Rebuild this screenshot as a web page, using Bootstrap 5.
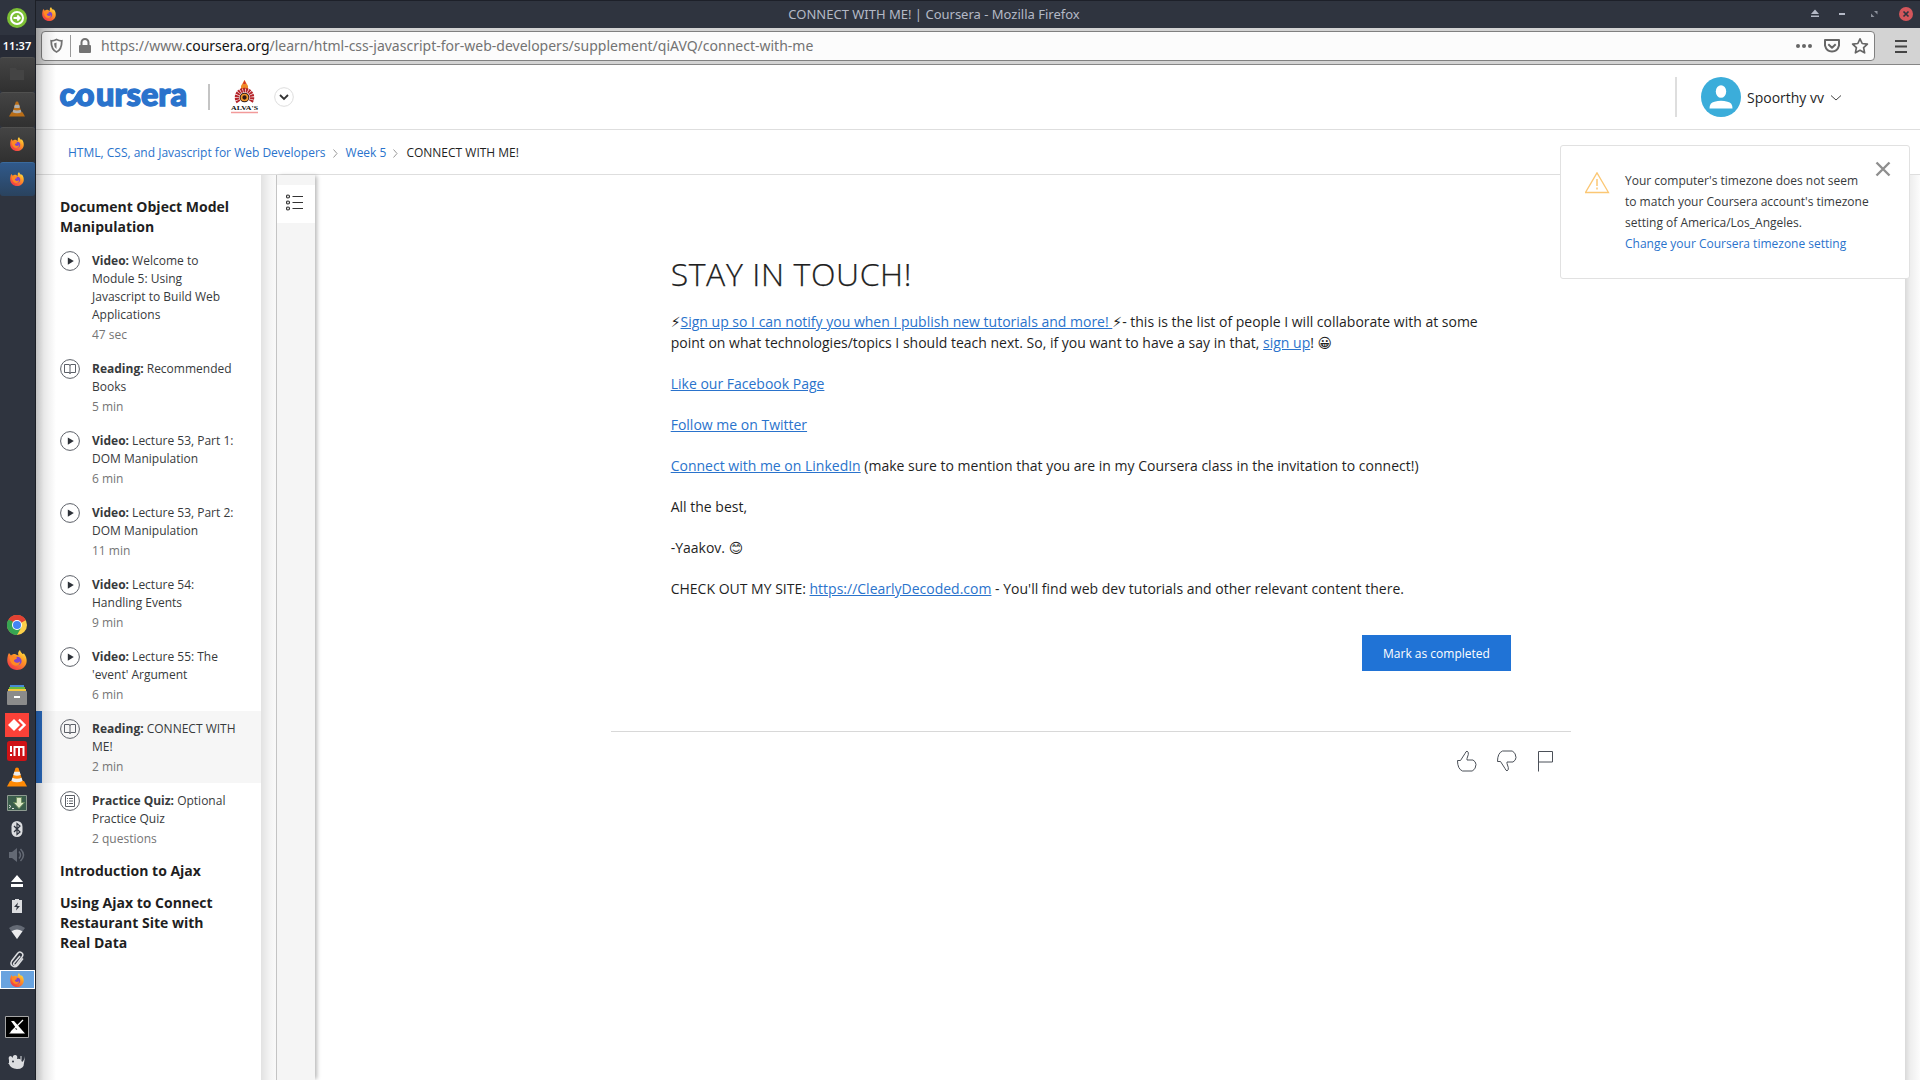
<!DOCTYPE html>
<html lang="en">
<head>
<meta charset="utf-8">
<title>CONNECT WITH ME! | Coursera</title>
<link href="https://cdn.jsdelivr.net/npm/bootstrap@5.3.0/dist/css/bootstrap.min.css" rel="stylesheet">
<style>
body{font-family:"Open Sans","DejaVu Sans",sans-serif;font-size:14px;line-height:21px;color:#1f1f1f;background:#fff;width:1920px;height:1080px;overflow:hidden}
a{color:#2a73cc}
svg{display:block;flex:none}
.dock{width:36px;background:#2f343f;border-right:1px solid #1c1f26;color:#fff;flex:none}
.dock .slot{width:35px;margin-right:-1px;display:flex;align-items:center;justify-content:center;flex:none;padding-right:1px}
.s35{height:35px}.s34{height:34px}.s26{height:26px}.s25{height:25px}
.clock{height:22px;font:600 11px/22px "Noto Sans",sans-serif;background:#272b36;white-space:nowrap;letter-spacing:.1px}
.task{height:35px;background:linear-gradient(#444,#303030);border-radius:3px;border-top:1px solid #50504f;padding-bottom:2px}
.task.current{height:34px;background:linear-gradient(#30598a,#2a435f);border-color:#3a6a9d}
.dim{opacity:.65}
.tray-gap{height:412px}
.titlebar{height:28px;background:#2f343f;border-top:1px solid #1d2029;color:#b4b9c6;font:13px/26px "Noto Sans",sans-serif;padding:0 6px 2px}
.urlrow{height:37px;background:#d3d3d3;border-bottom:1px solid #868686}
.urlbox{height:30px;width:1834px;margin:3px 0 0 5px;border:1px solid #808080;border-radius:4px;background:#fcfcfc;font:14px/26px "Noto Sans",sans-serif;color:#737373}
.urlbox b{font-weight:400;color:#111}
.menu-lines{margin:11px 0 0 19px}
.site-head{height:65px;border-bottom:1px solid #dedede}
.user{padding-right:78px}
.name-label{margin:1px 6px 0;font-size:14px}
.crumbs{height:45px;border-bottom:1px solid #dedede;font-size:12px;padding-left:32px}
.crumbs svg{margin:2px 8px 0 7px}
.crumbs a,.toastbox a{text-decoration:none}
.outline{width:225px;flex:none;padding-top:22px}
.outline h2{font-size:14px;line-height:20px;font-weight:700;margin:0 0 6px 24px}
.outline h2.later{margin:6px 0 12px 24px}
.lesson{padding:9px 0 0 24px;gap:12px;font-size:12px;line-height:18px;color:#373a3c;height:72px}
.lesson svg{margin-top:-1px}
.lesson.tall{height:108px}
.lesson.selected{background:#f6f6f6;border-left:6px solid #2a6cc2;padding-left:18px}
.lesson p{margin:0;width:150px}
.lesson b{font-weight:700}
.lesson span{display:block;margin-top:2px;color:#757575}
.gutter{width:15px;flex:none;background:linear-gradient(90deg,#e2e2e2,#f4f4f4 60%,#fafafa)}
.rail{width:39px;flex:none;background:#f5f5f5;border-left:1px solid #c4c4c4;padding-top:10px;box-shadow:3px 0 4px -1px rgba(0,0,0,.28)}
.rail div{height:38px;background:#fff;padding:9px 0 0 9px}
.reading{padding:79px 0 0 296px}
.sheet{width:960px}
.copy{padding:0 60px 0 59.7px}
.copy h1{font-size:32px;line-height:40px;font-weight:300;letter-spacing:.6px;-webkit-text-stroke:.25px #1f1f1f;margin:0 0 17px}
.copy p{margin:0 0 20px;width:825px}
.btn-done{background:#2073d6;color:#fff;border-radius:0;width:149px;height:36px;font-size:12px;line-height:37px;padding:0;border:0}
.rule{border-top:1px solid #d8d8d8;margin-top:60px;padding:18px 14px 0 0;gap:20px}
.edge-l{left:36px;top:28px;width:20px;height:1052px;background:linear-gradient(90deg,rgba(0,0,0,.24),rgba(0,0,0,.09) 40%,transparent)}
.edge-r{left:1905px;top:175px;width:15px;height:905px;background:linear-gradient(90deg,#d9d9d9,#eee 35%,#fcfcfc)}
.toastbox{left:1560px;top:145px;width:350px;height:134px;background:#fff;border:1px solid #e1e1e1;border-radius:3px;font-size:12px;color:#373a3c;padding:24px 18px 0 24px}
.warn{margin-top:2px}
.dismiss{margin-top:-9px}
</style>
<script src="https://cdn.jsdelivr.net/npm/bootstrap@5.3.0/dist/js/bootstrap.bundle.min.js"></script>
</head>
<body class="d-flex">
<svg width="0" height="0" class="position-absolute">
<defs>
<linearGradient id="fx" x1=".9" y1="0" x2=".2" y2="1"><stop offset="0" stop-color="#fff04a"/><stop offset=".4" stop-color="#ff9a24"/><stop offset="1" stop-color="#f0304c"/></linearGradient>
<symbol id="firefox" viewBox="0 0 20 20"><path fill="url(#fx)" d="M1 5l1-2 2 2.500c1-1 2-1.500 4-1.500L10 5l1.500.5C10.500 3 11.500 1 13 0c.5 2 1.500 2.500 2.500 4L17 3.500C19 6 20 9 19.600 12 19 16.500 15 20 10 20S.5 16 .3 11C.2 8.500.6 7 1 5z"/><circle cx="10.300" cy="11" r="4.300" fill="#8145c9"/><path fill="#ff8a22" d="M2.500 7c2.500-1 4 0 6 0 2 .3 2 1.500 0 2.300-1.500.5-2 1.200-1 2.500 1.500 1.500 4 1.200 5.500-.4C13 16 8 17 5 14c-1.500-2-2.500-4.500-2.500-7z"/></symbol>
<symbol id="vlc" viewBox="0 0 20 20"><path d="M3 14h14l3 5.500H0z" fill="#ff8a05"/><path d="M8.500 1q1.500-1 3 0l4.500 14.500q-6 3-12 0z" fill="#ff8a05"/><path d="M7.300 4.800h5.400l1 3.200q-3.700 1.500-7.400 0zM5.400 10.800q4.600 2 9.200 0l1 3.200q-5.600 2.500-11.200 0z" fill="#eee"/></symbol>
<symbol id="play" viewBox="0 0 20 20"><circle cx="10" cy="10" r="9.400" fill="none" stroke="#5c6068"/><path d="M7.800 6.500v7.200l6-3.600z" fill="#2d3138"/></symbol>
<symbol id="book" viewBox="0 0 20 20"><g fill="none" stroke="#5c6068"><circle cx="10" cy="10" r="9.400"/><path d="M4.500 5.500h4.500q1 .2 1 1 0-.8 1-1h4.500v8h-4.500q-1 0-1 1 0-1-1-1H4.500zM10 6v9"/></g></symbol>
</defs></svg>

<nav class="dock d-flex flex-column">
<div class="slot s35"><svg width="20" height="20" viewBox="0 0 20 20"><circle cx="10" cy="10" r="10" fill="#7cbf35"/><circle cx="10" cy="10" r="6" fill="none" stroke="#fff" stroke-width="2"/><path d="M6.500 10h6M10.300 7.500l2.500 2.500-2.500 2.500" stroke="#fff" stroke-width="1.800" fill="none"/></svg></div>
<div class="slot clock">11:37</div>
<div class="slot task"><svg width="16" height="14"><path d="M1 1h6l1 2h7v10H1z" fill="#444"/></svg></div>
<div class="slot task"><svg class="dim" width="16" height="16"><use href="#vlc"/></svg></div>
<div class="slot task"><svg width="14" height="14"><use href="#firefox"/></svg></div>
<div class="slot task current"><svg width="14" height="14"><use href="#firefox"/></svg></div>
<div class="tray-gap"></div>
<div class="slot s34"><svg width="20" height="20" viewBox="0 0 20 20"><circle cx="10" cy="10" r="10" fill="#fdd04a"/><path d="M10 10L1.300 5A10 10 0 0 1 18.700 5z" fill="#e34133"/><path d="M10 10L18.700 5H10z" fill="#e34133"/><path d="M1.300 5A10 10 0 0 0 10 20l4.300-7.500L10 10z" fill="#36a552"/><path d="M5.700 12.500L1.300 5l4 1z" fill="#36a552"/><circle cx="10" cy="10" r="5" fill="#fff"/><circle cx="10" cy="10" r="4" fill="#4285f4"/></svg></div>
<div class="slot s35"><svg width="20" height="20"><use href="#firefox"/></svg></div>
<div class="slot s35"><svg width="20" height="20" viewBox="0 0 20 20"><path d="M3 0h14v2H3z" fill="#4688d4"/><path d="M2 2h16v2H2z" fill="#69b93c"/><path d="M1 4h18v2H1z" fill="#f4c641"/><rect y="6" width="20" height="14" rx="1" fill="#8b8b8b"/><path d="M7 11h6v2H7z" fill="#fff"/></svg></div>
<div class="slot s26"><svg width="24" height="24" viewBox="0 0 24 24"><path d="M0 0h24v24H0z" fill="#fb4138"/><path d="M9 6l6 6-6 6-6-6z" fill="#fff"/><path d="M14 6.500L19.500 12 14 17.500" fill="none" stroke="#fff" stroke-width="2.400"/></svg></div>
<div class="slot s26"><svg width="20" height="20" viewBox="0 0 20 20"><rect width="20" height="20" rx="2.500" fill="#cf1216"/><path d="M4 5v6M4 13v2M7.500 15V6h9v9M12 6v9" fill="none" stroke="#fff" stroke-width="2"/></svg></div>
<div class="slot s26"><svg width="20" height="20"><use href="#vlc"/></svg></div>
<div class="slot s26"><svg width="20" height="16" viewBox="0 0 20 16"><path d="M.5.500h19v15H.5z" fill="#3a5d4b" stroke="#8e9b91"/><path d="M9.500 2.500h5v5h3l-5.500 6-5.500-6h3z" fill="#dbe7c4" stroke="#6d8e5f"/><path d="M2 10l2 1.500L2 13M5 13.500h2" stroke="#ddd" fill="none"/></svg></div>
<div class="slot s26"><svg width="12" height="16" viewBox="0 0 12 16"><rect x=".5" width="11" height="16" rx="5.500" fill="#dcdde0"/><path d="M3 5l6 6-3 2.500v-11L9 5l-6 6" fill="none" stroke="#2f343f" stroke-width="1.200"/></svg></div>
<div class="slot s26"><svg width="16" height="16" viewBox="0 0 16 16"><path d="M0 5h3l5-4v14l-5-4H0z" fill="#646a75"/><path d="M10 4.500q3 3.500 0 7M11.500 2q6 6 0 12" fill="none" stroke="#646a75" stroke-width="1.500"/></svg></div>
<div class="slot s25"><svg width="14" height="12" viewBox="0 0 14 12"><path d="M7 0l6 7H1zM1 9h12v3H1z" fill="#fff"/></svg></div>
<div class="slot s26"><svg width="10" height="14" viewBox="0 0 10 14"><path d="M0 1h3V0h4v1h3v13H0z" fill="#dcdde0"/><path d="M6 3.500L2 8h2.800L4 11.500 8 7H5.200z" fill="#2f343f"/></svg></div>
<div class="slot s26"><svg width="16" height="14" viewBox="0 0 16 14"><path d="M0 3q8-6 16 0L8 14z" fill="#646a75"/><path d="M2.500 6.200q5.500-3.500 11 0L8 14z" fill="#ececee"/></svg></div>
<div class="slot s25 pt-1"><svg width="16" height="17" viewBox="0 0 16 17"><path d="M11 5l-6 7q-1 1.500.3 2t2-.5l6-8q1.500-2.500-.8-3.900t-4 .9l-5.800 7.500q-1.800 3.200.8 5t5-.5l5.500-7" fill="none" stroke="#dcdde0" stroke-width="1.500"/></svg></div>
<div class="slot border border-white" style="height:19px;background:#69a3df"><svg width="14" height="14"><use href="#firefox"/></svg></div>
<div class="slot s25"></div>
<div class="slot s25"><svg width="24" height="22" viewBox="0 0 24 22"><path d="M.5.500h23v21H.5z" fill="#000" stroke="#a5a5a5"/><path d="M4 17.500l6-5q2 2.500 4 0l6 5zM6 5l3 0 11 12.500h-5z" fill="#fff"/><path d="M18 4L6 16" stroke="#fff" stroke-width="1.300"/></svg></div>
<div class="slot s25 mt-2 pt-1"><svg width="18" height="15" viewBox="0 0 18 15"><path d="M1 6q-1-3 1-4 2 0 2.500 2Q5 .5 7.500 1T9 5q4-1 5 3 2-1 3-6-.5 5-1 7 0 6-7 6-6.500-.5-8-5H0l1-1z" fill="#dcdde0"/><path d="M13 2v4" stroke="#dcdde0"/><circle cx="5" cy="7.500" r="1" fill="#2f343f"/></svg></div>
</nav>

<div class="flex-grow-1 d-flex flex-column">
<div class="titlebar d-flex align-items-center">
<svg width="14" height="14"><use href="#firefox"/></svg>
<div class="flex-grow-1 text-center ps-1">CONNECT WITH ME! | Coursera - Mozilla Firefox</div>
<svg width="106" height="16" viewBox="0 0 106 16"><path d="M7 3.500l4 4.500H3zM3 9.500h8V11H3z" fill="#b4b9c6"/><path d="M31 7h6v2h-6z" fill="#b4b9c6"/><path d="M66 5h3.500v3.500zM63 7.500v3.500h3.500z" fill="#8d929d"/><circle cx="98" cy="8" r="7" fill="#d4565b"/><path d="M95.500 5.500l5 5m0-5l-5 5" stroke="#2f343f" stroke-width="1.700"/></svg>
</div>
<div class="urlrow d-flex">
<div class="urlbox d-flex align-items-center">
<svg width="59" height="28" viewBox="0 0 59 28"><path d="M14.500 7.500q3 1.500 5.300 1.300 0 9-5.300 11.200-5.300-2.200-5.300-11.200Q11.500 9 14.500 7.500z" fill="none" stroke="#737373" stroke-width="1.800"/><path d="M14.500 10.500v6.500q-2.500-2-2.500-5.600z" fill="#737373"/><path d="M28.500 3v22" stroke="#999"/><path d="M39.500 13v-2.500a3.500 3.500 0 0 1 7 0V13" fill="none" stroke="#737373" stroke-width="2"/><rect x="37" y="13" width="12" height="8" rx="1" fill="#737373"/></svg>
<div class="flex-grow-1">https://www.<b>coursera.org</b>/learn/html-css-javascript-for-web-developers/supplement/qiAVQ/connect-with-me</div>
<svg width="78" height="20" viewBox="0 0 78 20"><g fill="#666"><circle cx="2" cy="10" r="2"/><circle cx="8" cy="10" r="2"/><circle cx="14" cy="10" r="2"/></g><path d="M29 4h14v5.500q-1.500 6-7 6t-7-6zM32.300 8.200L36 11.700l3.700-3.500" fill="none" stroke="#666" stroke-width="2" stroke-linejoin="round"/><path d="M64 2.800l2.200 4.700 5.200.6-3.800 3.600 1 5.100-4.600-2.500-4.600 2.500 1-5.100-3.800-3.600 5.200-.6z" fill="none" stroke="#666" stroke-width="1.700" stroke-linejoin="round"/></svg>
</div>
<svg class="menu-lines" width="14" height="14" viewBox="0 0 14 14"><path d="M1 2h12M1 7.500h12M1 13h12" stroke="#444" stroke-width="2"/></svg>
</div>

<header class="site-head d-flex align-items-center">
<svg width="238" height="48" viewBox="0 0 238 48"><g fill="#2a73cc" stroke="#2a73cc" stroke-width="1.400" font-family="Lato,sans-serif" font-weight="900" font-size="32"><text y="32.500"><tspan x="23.500">c</tspan><tspan x="40">o</tspan></text><text x="60" y="32.500" textLength="91" lengthAdjust="spacingAndGlyphs">ursera</text></g><path d="M32 30.500q6 0 9-6t7-6" stroke="#2a73cc" stroke-width="4.600" fill="none"/><path d="M173 11v26" stroke="#c4c4c4" stroke-width="2"/>
<path d="M208.500 7l3.500 6v3h-7v-3z" fill="#f08a2a"/><path d="M208.500 7l1.500 4h-3z" fill="#d8362a"/><path d="M202.500 29a7.500 7.500 0 1 1 12 0" fill="none" stroke="#b5242a" stroke-width="4.500" stroke-dasharray="1.900 .6"/><circle cx="208.500" cy="24.500" r="4.800" fill="#2e1a18"/><circle cx="208.500" cy="24.500" r="3" fill="none" stroke="#f49a2c" stroke-width="1.700"/><text x="195" y="37" font-family="Liberation Serif,serif" font-weight="700" font-size="7" textLength="27" lengthAdjust="spacingAndGlyphs" fill="#111">ALVA'S</text><path d="M195 39.500h27" stroke="#f29a9a" stroke-width="1.500"/></svg>
<svg width="20" height="20" viewBox="0 0 20 20"><circle cx="10" cy="10" r="9.300" fill="#fff" stroke="#ddd"/><path d="M6 8l4 4 4-4" fill="none" stroke="#333" stroke-width="1.800"/></svg>
<div class="ms-auto d-flex align-items-center user">
<svg width="72" height="40" viewBox="0 0 72 40"><path d="M7 0v40" stroke="#dedede" stroke-width="2"/><circle cx="52" cy="20" r="20" fill="#3badda"/><ellipse cx="52" cy="14.500" rx="5.200" ry="6.300" fill="#fff"/><path d="M40.500 31.500q0-6 5-6.800 6.500-1.800 13 0 5 .8 5 6.800z" fill="#fff"/></svg>
<div class="name-label">Spoorthy vv</div>
<svg class="mt-1" width="12" height="8" viewBox="0 0 12 8"><path d="M1 .5l5 4.500 5-4.500" fill="none" stroke="#444"/></svg>
</div>
</header>

<nav class="crumbs d-flex align-items-center"><a href="#">HTML, CSS, and Javascript for Web Developers</a><svg width="5" height="9"><path d="M.5.500l3.500 4-3.500 4" fill="none" stroke="#999"/></svg><a href="#">Week 5</a><svg width="5" height="9"><path d="M.5.500l3.500 4-3.500 4" fill="none" stroke="#999"/></svg><span>CONNECT WITH ME!</span></nav>

<div class="d-flex flex-grow-1">
<aside class="outline">
<h2>Document Object Model<br>Manipulation</h2>
<div class="lesson tall d-flex"><svg width="20" height="20"><use href="#play"/></svg><p><b>Video:</b> Welcome to<br>Module 5: Using<br>Javascript to Build Web<br>Applications<span>47 sec</span></p></div>
<div class="lesson d-flex"><svg width="20" height="20"><use href="#book"/></svg><p><b>Reading:</b> Recommended<br>Books<span>5 min</span></p></div>
<div class="lesson d-flex"><svg width="20" height="20"><use href="#play"/></svg><p><b>Video:</b> Lecture 53, Part 1:<br>DOM Manipulation<span>6 min</span></p></div>
<div class="lesson d-flex"><svg width="20" height="20"><use href="#play"/></svg><p><b>Video:</b> Lecture 53, Part 2:<br>DOM Manipulation<span>11 min</span></p></div>
<div class="lesson d-flex"><svg width="20" height="20"><use href="#play"/></svg><p><b>Video:</b> Lecture 54:<br>Handling Events<span>9 min</span></p></div>
<div class="lesson d-flex"><svg width="20" height="20"><use href="#play"/></svg><p><b>Video:</b> Lecture 55: The<br>'event' Argument<span>6 min</span></p></div>
<div class="lesson selected d-flex"><svg width="20" height="20"><use href="#book"/></svg><p><b>Reading:</b> CONNECT WITH<br>ME!<span>2 min</span></p></div>
<div class="lesson d-flex"><svg width="20" height="20" viewBox="0 0 20 20"><g fill="none" stroke="#5c6068"><circle cx="10" cy="10" r="9.400"/><path d="M5.500 4.500h9v11h-9zM9 7.500h4M9 10h4M9 12.500h4M7 7.500h1M7 10h1M7 12.500h1"/></g></svg><p><b>Practice Quiz:</b> Optional<br>Practice Quiz<span>2 questions</span></p></div>
<h2 class="later">Introduction to Ajax</h2>
<h2 class="later">Using Ajax to Connect<br>Restaurant Site with<br>Real Data</h2>
</aside>
<div class="gutter"></div>
<div class="rail"><div><svg width="18" height="18" viewBox="0 0 18 18"><g fill="none" stroke="#333" stroke-width="1.200"><circle cx="2" cy="2.500" r="1.500"/><circle cx="2" cy="8.500" r="1.500"/><circle cx="2" cy="14.500" r="1.500"/><path d="M6.500 2.500H17M6.500 8.500H17M6.500 14.500H17"/></g></svg></div></div>
<main class="reading flex-grow-1">
<div class="sheet">
<div class="copy">
<h1>STAY IN TOUCH!</h1>
<p>⚡<a href="#">Sign up so I can notify you when I publish new tutorials and more! </a>⚡- this is the list of people I will collaborate with at some point on what technologies/topics I should teach next. So, if you want to have a say in that, <a href="#">sign up</a>! 😀</p>
<p><a href="#">Like our Facebook Page</a></p>
<p><a href="#">Follow me on Twitter</a></p>
<p><a href="#">Connect with me on LinkedIn</a> (make sure to mention that you are in my Coursera class in the invitation to connect!)</p>
<p>All the best,</p>
<p>-Yaakov. 😊</p>
<p>CHECK OUT MY SITE: <a href="#">https://ClearlyDecoded.com</a> - You'll find web dev tutorials and other relevant content there.</p>
<div class="d-flex justify-content-end pt-3"><button class="btn btn-done">Mark as completed</button></div>
</div>
<div class="rule d-flex justify-content-end">
<svg width="20" height="22" viewBox="0 0 20 22"><path id="thumb" d="M.5 10.500h3L8 3.500Q9 1.200 10 1.200q1.800.5 1.300 3.300L10 8.500v1.500h6q2.800 1.500 3 4.500 0 4-3.500 6.500H5.500Q.5 19 .5 10.500z" fill="none" stroke="#4b5058"/></svg>
<svg width="20" height="22" viewBox="0 0 20 22"><use href="#thumb" transform="matrix(1 0 0 -1 0 22)"/></svg>
<svg width="20" height="22" viewBox="0 0 20 22"><path d="M1.500 21.500v-20h14v10.500h-14" fill="none" stroke="#4b5058"/></svg>
</div>
</div>
</main>
</div>
</div>

<div class="edge-l position-absolute"></div>
<div class="edge-r position-absolute"></div>
<div class="toastbox position-absolute d-flex">
<svg class="warn" width="40" height="24" viewBox="0 0 40 24"><path d="M12 .8L23.500 20.500H.5z" fill="none" stroke="#fbc774" stroke-width="1.300"/><path d="M12 7v7M12 15.500v2" stroke="#fbc774" stroke-width="1.500"/></svg>
<div class="flex-grow-1">Your computer's timezone does not seem<br>to match your Coursera account's timezone<br>setting of America/Los_Angeles.<br><a href="#">Change your Coursera timezone setting</a></div>
<svg class="dismiss" width="16" height="16" viewBox="0 0 16 16"><path d="M1.500 1.500l13 13M14.500 1.500l-13 13" stroke="#8f8f8f" stroke-width="2.400"/></svg>
</div>
</body>
</html>
